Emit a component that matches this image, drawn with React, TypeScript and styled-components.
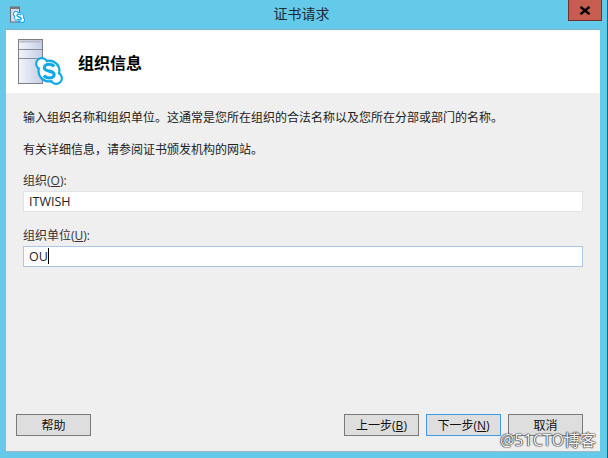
import React from "react";
import styled, { createGlobalStyle } from "styled-components";

const Global = createGlobalStyle`
  html, body { margin: 0; padding: 0; background: #65c9ea; }
  * { box-sizing: border-box; }
`;

const Window = styled.div`
  width: 608px;
  height: 458px;
  background: #65c9ea;
  border-right: 1px solid #3c5a66;
  display: flex;
  flex-direction: column;
  position: relative;
  font-family: "Open Sans", "Noto Sans CJK SC", sans-serif;
  font-size: 12px;
  color: #1a1a1a;
  overflow: hidden;
`;

const TitleBar = styled.div`
  height: 30px;
  flex: none;
  display: flex;
  align-items: flex-start;
  position: relative;
`;

const TitleIcon = styled.svg`
  margin: 6px 0 0 9px;
  width: 17px;
  height: 17px;
`;

const TitleText = styled.div`
  position: absolute;
  left: 0;
  right: 4px;
  top: 5px;
  text-align: center;
  font-size: 14px;
  line-height: 18px;
  color: #1c2a30;
`;

const CloseButton = styled.div`
  position: absolute;
  left: 568px;
  top: 0;
  width: 34px;
  height: 21px;
  background: #c75c50;
  border: 1px solid #6e3230;
  border-top: none;
  display: flex;
  align-items: center;
  justify-content: center;
`;

const Client = styled.div`
  margin: 0 7px 7px 6px;
  flex: 1;
  background: #efefef;
  display: flex;
  flex-direction: column;
  box-shadow: 0 -1px 0 #7fb4c8, 0 1px 0 #9fb8c2;
`;

const Header = styled.div`
  height: 63px;
  flex: none;
  background: #fff;
  display: flex;
  align-items: center;
  padding-left: 12px;
`;

const HeaderTitle = styled.div`
  margin-left: 14px;
  font-size: 16px;
  font-weight: 700;
  color: #000;
  line-height: 20px;
  position: relative;
  top: 1px;
`;

const Body = styled.div`
  flex: 1;
  display: flex;
  flex-direction: column;
  padding: 16px 17px 15px 17px;
`;

const Paragraph = styled.p`
  margin: 0 0 14px 0;
  height: 18px;
  line-height: 18px;
  font-size: 12px;
  color: #222;
  &:nth-of-type(2) { margin-bottom: 13px; }
`;

const FieldLabel = styled.label`
  display: block;
  height: 18px;
  line-height: 18px;
  margin-bottom: 1px;
  color: #333;
  u { text-decoration: underline; }
`;

const TextField = styled.div<{ $focused?: boolean }>`
  height: 21px;
  width: 560px;
  background: #fff;
  border: 1px solid ${(p) => (p.$focused ? "#a9c8e6" : "#e0e3e8")};
  padding-left: 5px;
  line-height: 19px;
  font-size: 12.5px;
  color: #222;
  margin-bottom: ${(p) => (p.$focused ? 0 : "15px")};
`;

const Caret = styled.span`
  display: inline-block;
  width: 1px;
  height: 16px;
  background: #000;
  vertical-align: -3px;
`;

const Footer = styled.div`
  margin-top: auto;
  display: flex;
  align-items: center;
  margin-left: -7px;
`;

const Spacer = styled.div`
  flex: 1;
`;

const Button = styled.div<{ $primary?: boolean }>`
  width: 75px;
  height: 22px;
  background: #dedede;
  border: 1px solid ${(p) => (p.$primary ? "#3f9ae8" : "#7a7a7a")};
  text-align: center;
  line-height: 21px;
  font-size: 12px;
  color: #111;
  margin-left: ${(p) => (p.$primary ? "7px" : "0")};
`;

const CancelButton = styled(Button)`
  margin-left: 7px;
`;

const Watermark = styled.div`
  position: absolute;
  left: 500px;
  top: 430px;
  font-size: 16px;
  line-height: 20px;
  color: #f4f4f4;
  text-shadow: 0 0 1px #333, 0 0 1px #333, 0 0 1px #333, 0 0 2px #777;
  white-space: nowrap;
`;

const SkypeBadge = () => (
  <>
    <g fill="#10a8ea">
      <circle cx="24" cy="24" r="9.6" />
      <circle cx="18" cy="18" r="5.6" />
      <circle cx="30" cy="30" r="5.6" />
    </g>
    <g fill="#fff">
      <circle cx="24" cy="24" r="7.8" />
      <circle cx="18" cy="18" r="3.8" />
      <circle cx="30" cy="30" r="3.8" />
    </g>
    <path d="M28.2 20.2c-.9-1.2-2.4-1.8-4.1-1.8-2.3 0-4 1.2-4 2.9 0 3.7 8.2 1.9 8.2 5.6 0 1.7-1.8 2.9-4.2 2.9-1.9 0-3.4-.7-4.4-2" fill="none" stroke="#10a8ea" strokeWidth="2.6" />
  </>
);

const ServerIcon = () => (
  <svg width="46" height="46" viewBox="0 0 46 46" style={{ flex: "none" }}>
    <defs>
      <linearGradient id="srv" x1="0" y1="0" x2="1" y2="0">
        <stop offset="0" stopColor="#f2f4fb" />
        <stop offset="1" stopColor="#c4cfe6" />
      </linearGradient>
    </defs>
    <rect x="0.5" y="0.5" width="24" height="44" fill="url(#srv)" stroke="#7d7f86" />
    <rect x="1.5" y="1.5" width="22" height="2" fill="#b9bcc6" />
    <line x1="1" y1="10.5" x2="24" y2="10.5" stroke="#8a8c94" />
    <line x1="1" y1="19.5" x2="24" y2="19.5" stroke="#8a8c94" />
    <g transform="translate(2.2 3.2) scale(1.2)">
      <SkypeBadge />
    </g>
  </svg>
);

const App = () => (
  <>
    <Global />
    <Window>
      <TitleBar>
        <TitleIcon viewBox="0 0 17 17">
          <rect x="1.5" y="1" width="9" height="15" fill="#d5dbee" stroke="#6a6c78" />
          <rect x="2" y="1" width="8" height="2" fill="#777" />
          <g transform="translate(-2.5 -1.5) scale(0.52)">
            <SkypeBadge />
          </g>
        </TitleIcon>
        <TitleText>证书请求</TitleText>
        <CloseButton>
          <svg width="12" height="9" viewBox="0 0 12 9">
            <path d="M1.5 .8 L10.5 8.2 M10.5 .8 L1.5 8.2" stroke="#000" strokeWidth="2.4" />
          </svg>
        </CloseButton>
      </TitleBar>
      <Client>
        <Header>
          <ServerIcon />
          <HeaderTitle>组织信息</HeaderTitle>
        </Header>
        <Body>
          <Paragraph>输入组织名称和组织单位。这通常是您所在组织的合法名称以及您所在分部或部门的名称。</Paragraph>
          <Paragraph>有关详细信息，请参阅证书颁发机构的网站。</Paragraph>
          <FieldLabel>组织(<u>O</u>):</FieldLabel>
          <TextField>ITWISH</TextField>
          <FieldLabel>组织单位(<u>U</u>):</FieldLabel>
          <TextField $focused>OU<Caret /></TextField>
          <Footer>
            <Button>帮助</Button>
            <Spacer />
            <Button>上一步(<u>B</u>)</Button>
            <Button $primary>下一步(<u>N</u>)</Button>
            <CancelButton>取消</CancelButton>
          </Footer>
        </Body>
      </Client>
      <Watermark>@51CTO博客</Watermark>
    </Window>
  </>
);

export default App;
